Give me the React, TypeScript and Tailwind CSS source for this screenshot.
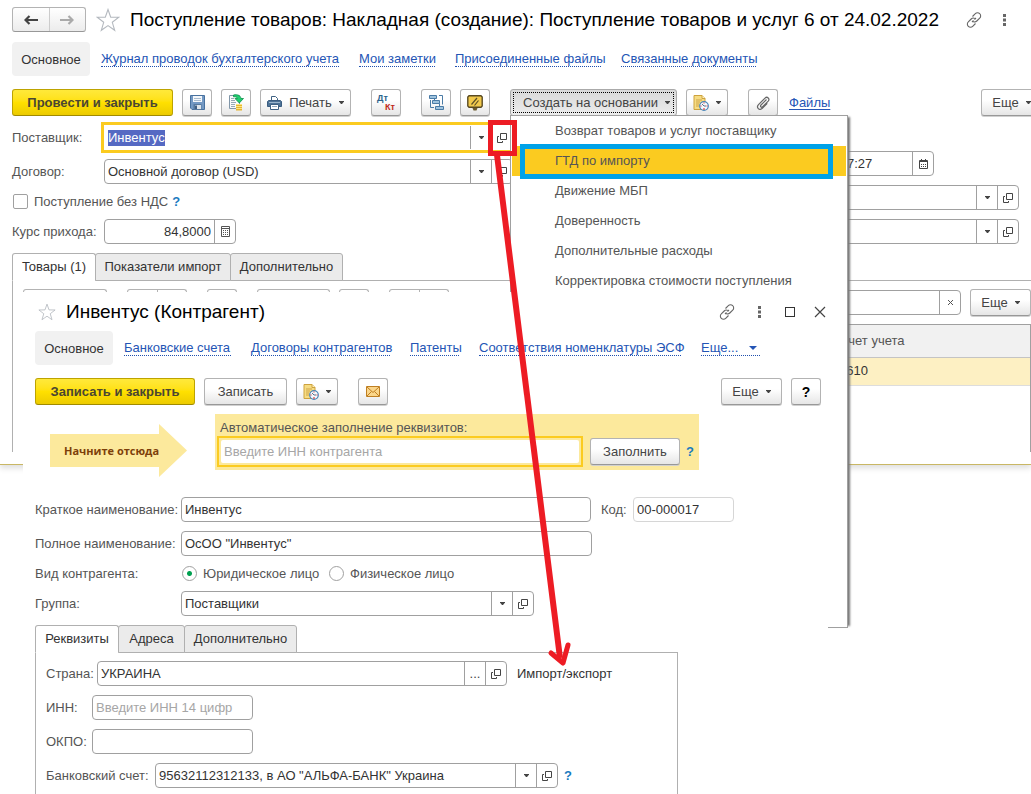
import React, { useEffect, useRef } from "react";

type ButtonProps = {
  className?: string;
  label?: string;
  children?: React.ReactNode;
};

function ToolButton({ className = "w-[30px]", label, children }: ButtonProps) {
  return (
    <button
      type="button"
      aria-label={label}
      className={`flex h-[27px] shrink-0 items-center justify-center rounded-[3px] border border-[#b3b3b3] border-b-[#989898] bg-linear-to-b from-white from-40% to-[#e6e6e6] text-[#444] shadow-[0_1px_0_#d0d0d0] ${className}`}
    >
      {children}
    </button>
  );
}

function PrimaryButton({ className = "", children }: ButtonProps) {
  return (
    <button
      type="button"
      className={`flex h-[27px] shrink-0 items-center justify-center rounded-[3px] border border-[#bda300] border-b-[#a08a00] bg-linear-to-b from-[#ffe93a] via-[#ffe000] to-[#eccb00] font-bold text-[#4a4633] ${className}`}
    >
      {children}
    </button>
  );
}

function Caret() {
  return (
    <svg width="5" height="3" viewBox="0 0 5 3" className="shrink-0" fill="currentColor">
      <path d="M0 0h5v.5L3 3H2L0 .5z" />
    </svg>
  );
}

function OpenIcon() {
  return (
    <svg width="10" height="10" viewBox="0 0 10 10" fill="none" stroke="#444">
      <path d="M3.5 .5h6v6h-6z" />
      <path d="M2 3.5H.5v6h5V8" />
    </svg>
  );
}

function CalcIcon() {
  return (
    <svg width="9" height="11" viewBox="0 0 9 11" fill="none" stroke="#555">
      <path d="M.5 .5h8v10h-8zM1 2.5h7" />
      <path d="M2 4.5h5M2 6.5h5M2 8.5h5" strokeDasharray="1 1" />
    </svg>
  );
}

function CalendarIcon() {
  return (
    <svg width="9" height="10" viewBox="0 0 9 10" fill="none" stroke="#444">
      <path d="M.5 1.5h8v8h-8z" />
      <path d="M0 2.5h9M2.5 0v2M6.5 0v2" />
      <path d="M2 5.5h5M2 7.5h5" strokeDasharray="1 1" />
    </svg>
  );
}

function Star({ size }: { size: number }) {
  return (
    <svg width={size} height={size} viewBox="0 0 24 24" fill="none" stroke="#b4b9bf" strokeWidth="1.1">
      <path d="M12 1.5l2.7 7.7 8.1.1-6.5 5 2.4 8L12 17.6l-6.7 4.7 2.4-8-6.5-5 8.1-.1z" />
    </svg>
  );
}

function LinkIcon() {
  return (
    <svg width="16" height="16" viewBox="0 0 16 16" fill="none" stroke="#666" strokeWidth="1.1">
      <path d="M6.5 4.5l2.8-2.8a3 3 0 0 1 4.4 0 3 3 0 0 1 0 4.4L10.8 9a3 3 0 0 1-3.6.5" />
      <path d="M9.500 11.500l-2.800 2.800a3 3 0 0 1-4.400 0 3 3 0 0 1 0-4.400L5.200 7a3 3 0 0 1 3.600-.5" />
      <path d="M6 10l1.500-1.500M8.500 7.500L10 6" />
    </svg>
  );
}

function DotsIcon() {
  return (
    <svg width="3" height="12" viewBox="0 0 3 12" fill="#666">
      <path d="M0 0h3v3H0zM0 4.5h3v3H0zM0 9h3v3H0z" />
    </svg>
  );
}

function SheetClockIcon() {
  return (
    <svg width="16" height="16" viewBox="0 0 16 16" fill="none">
      <path d="M1 .5h8l3 3v11H1z" fill="#f6dc83" stroke="#cda23e" />
      <path d="M9 .5v3h3" fill="#fff3c4" stroke="#cda23e" />
      <path d="M3 5h6M3 7h4M3 9h3M3 11h3" stroke="#cfa548" />
      <circle cx="11" cy="11" r="4.3" fill="#f3f8fc" stroke="#4a86b8" strokeWidth="1.2" />
      <path d="M11 11l-2-2M11 11h2" stroke="#55718a" />
      <path d="M11 13v2M11 7.5v1M7.500 11h1M13.500 11h1" stroke="#d22" />
    </svg>
  );
}

function SaveIcon() {
  return (
    <svg width="15" height="15" viewBox="0 0 15 15">
      <path d="M.5 .5h14v14H2L.5 13z" fill="#7399c4" stroke="#47719f" />
      <path d="M3 1h9v6H3z" fill="#f4f7fa" />
      <path d="M4 3.5h7M4 5.5h7" stroke="#a9bccf" />
      <path d="M3.5 9h8v6h-8z" fill="#56799f" />
      <path d="M5 10h6v4H5z" fill="#dfe6ec" />
      <path d="M5 10.5h2V14H5z" fill="#3f5f85" />
    </svg>
  );
}

function PostIcon() {
  return (
    <svg width="16" height="17" viewBox="0 0 16 17" fill="none">
      <path d="M1.5 1.5h10v13h-10z" fill="#fafafa" stroke="#8196a8" />
      <path d="M3 4.5h3M3 6.5h4M3 8.5h5M3 10.5h4M3 12.5h4" stroke="#98a8b5" />
      <path d="M5.5 1c4-1 7 .5 7.5 3.500h2.500l-4.200 4.500-4.300-4.500h2.500C9.200 3 7.500 2.500 5.500 2.800z" fill="#21cf70" stroke="#0b914a" strokeWidth=".8" />
      <path d="M8 10h6v6.500H8z" fill="#e4b532" />
      <path d="M8 10.5h6M8 12.5h6M8 14.5h6" stroke="#ffe681" />
    </svg>
  );
}

function PrinterIcon() {
  return (
    <svg width="15" height="14" viewBox="0 0 15 14" fill="none">
      <path d="M4.5 5V.5h4l2 2V5" fill="#fff" stroke="#3e6183" />
      <path d="M1.5 4.5h12l1 1v5H.5v-5z" fill="#4e7397" stroke="#3b5d80" />
      <path d="M2 6.5h11" stroke="#9cb6cd" />
      <path d="M3.5 8.5h8v5h-8z" fill="#fff" stroke="#3e6183" />
      <path d="M5 10.5h5" stroke="#8ca6bd" />
    </svg>
  );
}

function StructureIcon() {
  return (
    <svg width="15" height="15" viewBox="0 0 15 15" fill="#9fc3dd" stroke="#4a7ba6">
      <path d="M.5 .5h7v3h-7zM3.5 5.5h7v3h-7zM6.5 11.5h8v3h-8z" />
      <path d="M10 .5h3.500v9M1.500 5v7.500H5M5.500 3.500v2M10.500 8.500v3" fill="none" />
    </svg>
  );
}

function BoardIcon() {
  return (
    <svg width="16" height="16" viewBox="0 0 16 16" fill="none">
      <path d="M2 .8h12L15.200 2v9L14 12.200H2L.8 11V2z" fill="#f1c94c" stroke="#594a22" strokeWidth="1.4" />
      <path d="M4.500 9.500L10 3M7.500 10.500l4-5" stroke="#5d5026" strokeWidth="1.2" />
      <path d="M5.500 13h5l-1 2.500h-3z" fill="#6b5a2d" />
    </svg>
  );
}

function ClipIcon() {
  return (
    <svg width="14" height="14" viewBox="0 0 14 14" fill="none" stroke="#666" strokeWidth="1.2">
      <path d="M10.5 3.5L5 9c-1.4 1.5.4 3 1.7 1.7l5.500-5.600c2-2.200-.9-5.200-3.200-3L2.500 8.600c-2.700 3 1 6.400 3.800 3.700l5-5" />
    </svg>
  );
}

function MailIcon() {
  return (
    <svg width="14" height="11" viewBox="0 0 14 11" fill="none" stroke="#bf7f22">
      <path d="M.5 .5h13v10H.5z" fill="#fbd68a" />
      <path d="M1 1l6 5.500L13 1M1 10l4.500-4.500M13 10L8.500 5.500" />
    </svg>
  );
}

type FieldProps = {
  label: string;
  id?: string;
  value?: string;
  placeholder?: string;
  className?: string;
  inputClass?: string;
  inputRef?: React.Ref<HTMLInputElement>;
  buttons?: { name: string; icon: React.ReactNode }[];
};

const DROP = { name: "Выбрать", icon: <Caret /> };
const OPEN = { name: "Открыть", icon: <OpenIcon /> };

function Field({
  label,
  id,
  value,
  placeholder,
  className = "rounded-[4px] border-[#a0a0a0]",
  inputClass = "",
  inputRef,
  buttons = [],
}: FieldProps) {
  return (
    <div className={`flex h-[25px] shrink-0 border bg-white ${className}`}>
      <input
        id={id}
        ref={inputRef}
        aria-label={id ? undefined : label}
        defaultValue={value}
        placeholder={placeholder}
        className={`w-0 min-w-0 flex-1 bg-transparent px-[3px] text-[#333] outline-none placeholder:text-[#a6a6a6] selection:bg-[#5569c3] selection:text-white ${inputClass}`}
      />
      {buttons.map((button) => (
        <button
          key={button.name}
          type="button"
          aria-label={button.name}
          className="flex w-[21px] shrink-0 items-center justify-center border-l border-[#a0a0a0] text-[#444]"
        >
          {button.icon}
        </button>
      ))}
    </div>
  );
}

function Tabs({ items }: { items: { name: string; width: string }[] }) {
  return (
    <div role="tablist" className="relative z-1 -mb-px flex h-[28px] shrink-0">
      {items.map((tab, index) => (
        <button
          key={tab.name}
          role="tab"
          type="button"
          aria-selected={index === 0}
          className={`-mr-px rounded-t-[3px] border border-[#b0b0b0] text-[#333] ${tab.width} ${
            index === 0 ? "border-b-white bg-white" : "bg-[#ebebeb]"
          }`}
        >
          {tab.name}
        </button>
      ))}
    </div>
  );
}

function NavLink({ className = "", children }: { className?: string; children: React.ReactNode }) {
  return (
    <a href="#" className={`shrink-0 border-b border-dotted border-[#1f4fae] leading-[14px] whitespace-nowrap text-[#2455b5] ${className}`}>
      {children}
    </a>
  );
}

const menuItems = [
  "Возврат товаров и услуг поставщику",
  "ГТД по импорту",
  "Движение МБП",
  "Доверенность",
  "Дополнительные расходы",
  "Корректировка стоимости поступления",
];

function CreateMenu() {
  return (
    <ul className="absolute top-full left-0 z-10 h-[513px] w-[338px] border border-[#a0a0a0] bg-white px-px shadow-[4px_0_2px_-2px_#777]">
      {menuItems.map((item, index) => (
        <li key={item}>
          <button
            type="button"
            className={`flex h-[30px] w-full items-center pl-[43px] text-[#555] ${index === 1 ? "bg-[#fbcb20]" : ""}`}
          >
            {item}
          </button>
        </li>
      ))}
    </ul>
  );
}

function DocumentWindow() {
  const supplier = useRef<HTMLInputElement>(null);

  useEffect(() => {
    supplier.current?.focus();
    supplier.current?.select();
  }, []);

  return (
    <section className="h-[465px] border-b border-[#c9b764] pt-[7px] pl-3 shadow-[0_3px_6px_#ddd]">
      <header className="flex h-[25px] items-center">
        <div className="flex h-[25px] w-[74px] shrink-0 rounded-[3px] border border-[#b3b3b3] border-b-[#989898] bg-linear-to-b from-white to-[#ececec]">
          <button type="button" aria-label="Назад" className="flex flex-1 items-center justify-center border-r border-[#ccc] text-[#444]">
            <svg width="14" height="10" viewBox="0 0 14 10" fill="none" stroke="currentColor" strokeWidth="2.2">
              <path d="M14 5H2M5.5 1L1.500 5l4 4" />
            </svg>
          </button>
          <button type="button" aria-label="Вперед" className="flex flex-1 items-center justify-center text-[#aaa]">
            <svg width="14" height="10" viewBox="0 0 14 10" fill="none" stroke="currentColor" strokeWidth="2.2">
              <path d="M0 5h12M8.500 1l4 4-4 4" />
            </svg>
          </button>
        </div>
        <button type="button" aria-label="В избранное" className="ml-[10px] shrink-0">
          <Star size={24} />
        </button>
        <h1 className="ml-[10px] w-0 flex-1 text-[19px] whitespace-nowrap text-black">
          Поступление товаров: Накладная (создание): Поступление товаров и услуг 6 от 24.02.2022
        </h1>
        <button type="button" aria-label="Ссылка">
          <LinkIcon />
        </button>
        <button type="button" aria-label="Меню окна" className="mr-[25px] ml-[21px]">
          <DotsIcon />
        </button>
      </header>

      <nav className="mt-[10px] flex h-[34px] items-center gap-5">
        <span className="-mr-[9px] flex h-full w-[78px] items-center justify-center rounded-[4px] bg-[#f1f1f1] pt-px text-[#333]">
          Основное
        </span>
        <NavLink className="w-[238px]">Журнал проводок бухгалтерского учета</NavLink>
        <NavLink className="w-[76px]">Мои заметки</NavLink>
        <NavLink className="w-[146px]">Присоединенные файлы</NavLink>
        <NavLink className="w-[135px]">Связанные документы</NavLink>
      </nav>

      <div className="mt-[13px] flex h-[27px] items-center gap-[9px]">
        <PrimaryButton className="w-[161px]">Провести и закрыть</PrimaryButton>
        <ToolButton label="Записать">
          <SaveIcon />
        </ToolButton>
        <ToolButton label="Провести">
          <PostIcon />
        </ToolButton>
        <ToolButton className="w-[91px] gap-[7px]">
          <PrinterIcon />
          Печать
          <Caret />
        </ToolButton>
        <ToolButton className="ml-[11px] w-[30px]" label="Дт Кт">
          <span className="grid w-[18px] text-[9px] leading-[9px] font-bold">
            <span className="text-left text-[#2b638c]">Дт</span>
            <span className="text-right text-[#c02818]">Кт</span>
          </span>
        </ToolButton>
        <ToolButton className="ml-[11px] w-[30px]" label="Структура подчиненности">
          <StructureIcon />
        </ToolButton>
        <ToolButton label="Показать">
          <BoardIcon />
        </ToolButton>
        <div className="relative ml-[11px] h-[26px] shrink-0 self-start">
          <button
            type="button"
            aria-haspopup="menu"
            aria-expanded="true"
            className="h-[27px] w-[167px] rounded-[3px] border border-[#aaa] bg-linear-to-b from-[#d9d9d9] to-[#ececec] p-[2px] text-[#444]"
          >
            <span className="flex h-full items-center justify-center gap-[7px] border border-dotted border-black pl-[6px] whitespace-nowrap">
              Создать на основании
              <Caret />
            </span>
          </button>
          <CreateMenu />
        </div>
        <ToolButton className="w-[42px] gap-[7px]" label="Отчеты">
          <SheetClockIcon />
          <Caret />
        </ToolButton>
        <ToolButton className="ml-[11px] w-[30px]" label="Вложения">
          <ClipIcon />
        </ToolButton>
        <a href="#" className="ml-[2px] text-[#2455b5] underline underline-offset-2">
          Файлы
        </a>
        <ToolButton className="-mr-[11px] ml-auto w-[61px] gap-[7px]">
          Еще
          <Caret />
        </ToolButton>
      </div>

      <div className="mt-[9px] flex justify-between pr-3">
        <div className="text-[#555]">
          <div className="flex items-center">
            <label htmlFor="supplier" className="w-[92px]">
              Поставщик:
            </label>
            <Field
              id="supplier"
              label="Поставщик"
              value="Инвентус"
              inputRef={supplier}
              className="w-[409px] border-white outline-3 outline-[#fbcb20]"
              buttons={[DROP, OPEN]}
            />
          </div>
          <div className="mt-[9px] flex items-center">
            <label htmlFor="contract" className="w-[92px]">
              Договор:
            </label>
            <Field
              id="contract"
              label="Договор"
              value="Основной договор (USD)"
              className="w-[409px] rounded-[4px] border-[#a0a0a0]"
              buttons={[DROP, OPEN]}
            />
          </div>
          <div className="mt-[10px] flex h-[15px] items-center">
            <label className="flex items-center gap-[6px]">
              <input type="checkbox" className="ml-px size-[15px] appearance-none rounded-[2px] border border-[#a0a0a0]" />
              Поступление без НДС
            </label>
            <button type="button" className="ml-1 font-bold text-[#1a7bbf]">
              ?
            </button>
          </div>
          <div className="mt-[10px] flex items-center">
            <label htmlFor="rate" className="w-[92px]">
              Курс прихода:
            </label>
            <Field
              id="rate"
              label="Курс прихода"
              value="84,8000"
              className="w-[132px] rounded-[4px] border-[#a0a0a0]"
              inputClass="text-right"
              buttons={[{ name: "Калькулятор", icon: <CalcIcon /> }]}
            />
          </div>
        </div>
        <div className="flex flex-col justify-end gap-[9px]">
          <Field
            label="Дата"
            value="24.02.2022 12:17:27"
            className="w-[187px] rounded-[4px] border-[#a0a0a0]"
            inputClass="pl-[5px]"
            buttons={[{ name: "Календарь", icon: <CalendarIcon /> }]}
          />
          <Field label="Организация" className="w-[272px] rounded-[4px] border-[#a0a0a0]" buttons={[DROP, OPEN]} />
          <Field label="Склад" className="w-[272px] rounded-[4px] border-[#a0a0a0]" buttons={[DROP, OPEN]} />
        </div>
      </div>

      <div className="mt-[9px]">
        <Tabs
          items={[
            { name: "Товары (1)", width: "w-[84px]" },
            { name: "Показатели импорт", width: "w-[136px]" },
            { name: "Дополнительно", width: "w-[113px]" },
          ]}
        />
        <div className="h-[172px] border-t border-l border-[#b0b0b0] pt-2 pl-[10px]">
          <div className="flex h-[27px] items-center">
            <ToolButton className="w-[84px]" label="Добавить" />
            <ToolButton className="ml-5 w-[31px] rounded-r-none" label="Вверх" />
            <ToolButton className="-ml-px w-[30px] rounded-l-none" label="Вниз" />
            <ToolButton className="ml-5 w-[30px]" label="Копировать" />
            <ToolButton className="ml-5 w-[73px]" label="Подбор" />
            <ToolButton className="ml-[9px] w-[30px]" label="Изменить" />
            <ToolButton className="ml-5 w-[31px] rounded-r-none" label="Штрихкод" />
            <ToolButton className="-ml-px w-[30px] rounded-l-none" label="Загрузить" />
            <Field
              label="Поиск"
              className="mr-[9px] ml-auto w-[200px] rounded-[4px] border-[#a0a0a0]"
              buttons={[
                {
                  name: "Очистить",
                  icon: (
                    <svg width="5" height="5" viewBox="0 0 5 5" stroke="#555">
                      <path d="M0 0l5 5M5 0L0 5" />
                    </svg>
                  ),
                },
              ]}
            />
            <ToolButton className="w-[61px] gap-[7px]">
              Еще
              <Caret />
            </ToolButton>
          </div>
          <div className="mt-2 h-[128px] border border-b-0 border-[#a0a0a0]">
            <table className="w-full table-fixed border-collapse text-left">
              <thead>
                <tr className="h-8 border-b border-[#c4c4c4] bg-[#f1f1f1] text-[#555]">
                  <td />
                  <th className="w-[191px] font-normal">Счет учета</th>
                </tr>
              </thead>
              <tbody>
                <tr className="h-[28px] border-b border-[#ddd] bg-[#fdf0c3] text-[#333]">
                  <td />
                  <td>1610</td>
                </tr>
              </tbody>
            </table>
          </div>
        </div>
      </div>
    </section>
  );
}

function PartnerWindow() {
  return (
    <section className="absolute top-[292px] bottom-0 left-[23px] z-20 flex w-[805px] flex-col overflow-hidden bg-white pt-[7px] pr-[7px] pl-3 text-[#555]">
      <header className="-mr-[5px] flex h-[25px] shrink-0 items-center">
        <button type="button" aria-label="В избранное" className="ml-[3px]">
          <Star size={18} />
        </button>
        <h2 className="ml-[10px] flex-1 text-[19px] text-black">Инвентус (Контрагент)</h2>
        <button type="button" aria-label="Ссылка">
          <LinkIcon />
        </button>
        <button type="button" aria-label="Меню окна" className="ml-[23px]">
          <DotsIcon />
        </button>
        <button type="button" aria-label="Развернуть" className="ml-6 size-[10px] border border-[#333]" />
        <button type="button" aria-label="Закрыть" className="ml-[19px]">
          <svg width="12" height="12" viewBox="0 0 12 12" stroke="#444" strokeWidth="1.2">
            <path d="M1 1l10 10M11 1L1 11" />
          </svg>
        </button>
      </header>

      <nav className="mt-[7px] flex h-[34px] shrink-0 items-center gap-5">
        <span className="-mr-[9px] flex h-full w-[78px] items-center justify-center rounded-[4px] bg-[#f1f1f1] pt-px text-[#333]">
          Основное
        </span>
        <NavLink className="w-[107px]">Банковские счета</NavLink>
        <NavLink className="w-[139px]">Договоры контрагентов</NavLink>
        <NavLink className="w-[49px]">Патенты</NavLink>
        <NavLink className="w-[202px]">Соответствия номенклатуры ЭСФ</NavLink>
        <NavLink className="flex w-[59px] items-center justify-between pr-[3px]">
          Еще...
          <svg width="8" height="4" viewBox="0 0 8 4" fill="#2455b5">
            <path d="M0 0h8L4 4z" />
          </svg>
        </NavLink>
      </nav>

      <div className="mt-[13px] flex h-[27px] shrink-0 items-center gap-[9px]">
        <PrimaryButton className="w-[160px]">Записать и закрыть</PrimaryButton>
        <ToolButton className="w-[83px]">Записать</ToolButton>
        <ToolButton className="w-[42px] gap-[7px]" label="Отчеты">
          <SheetClockIcon />
          <Caret />
        </ToolButton>
        <ToolButton className="ml-[11px] w-[30px]" label="Письмо">
          <MailIcon />
        </ToolButton>
        <ToolButton className="ml-auto w-[61px] gap-[7px]">
          Еще
          <Caret />
        </ToolButton>
        <ToolButton>
          <b className="text-[14px] text-black">?</b>
        </ToolButton>
      </div>

      <div className="mt-[9px] flex h-[63px] shrink-0 items-start">
        <div className="relative mt-[10px] ml-[15px] flex h-[53px] w-[137px] items-center pl-[14px]">
          <svg className="absolute inset-0" width="137" height="53" viewBox="0 0 137 53" fill="#fce99c">
            <path d="M0 10h109V0l28 26.500L109 53V43H0z" />
          </svg>
          <strong className="relative font-['Open_Sans',sans-serif] text-[11px] whitespace-nowrap text-[#7d3f0a]">Начните отсюда</strong>
        </div>
        <div className="ml-7 h-14 w-[484px] bg-[#fce99c] pt-[5px] pl-[2px]">
          <label htmlFor="autofill" className="block h-[17px] pl-[3px] leading-[17px]">
            Автоматическое заполнение реквизитов:
          </label>
          <div className="flex items-center">
            <div className="w-[366px] border-2 border-[#fbcb20] p-[2px]">
              <input
                id="autofill"
                placeholder="Введите ИНН контрагента"
                className="block h-[23px] w-full rounded-[2px] bg-white px-[3px] outline-none placeholder:text-[#a6a6a6]"
              />
            </div>
            <ToolButton className="ml-[7px] w-[90px]">Заполнить</ToolButton>
            <button type="button" className="ml-[6px] font-bold text-[#1a7bbf]">
              ?
            </button>
          </div>
        </div>
      </div>

      <div className="mt-5 flex items-center">
        <label htmlFor="short-name" className="w-[146px]">
          Краткое наименование:
        </label>
        <Field id="short-name" label="Краткое наименование" value="Инвентус" className="w-[410px] rounded-[4px] border-[#a0a0a0]" />
        <label htmlFor="code" className="ml-[10px] w-8">
          Код:
        </label>
        <Field id="code" label="Код" value="00-000017" className="w-[101px] rounded-[4px] border-[#d6d6d6]" />
      </div>
      <div className="mt-[9px] flex items-center">
        <label htmlFor="full-name" className="w-[146px]">
          Полное наименование:
        </label>
        <Field id="full-name" label="Полное наименование" value={'ОсОО "Инвентус"'} className="w-[411px] rounded-[4px] border-[#a0a0a0]" />
      </div>
      <div role="radiogroup" aria-label="Вид контрагента" className="mt-[10px] flex h-[15px] shrink-0 items-center">
        <span className="w-[146px]">Вид контрагента:</span>
        <label className="flex w-[148px] items-center gap-[6px] pl-px">
          <input
            type="radio"
            name="kind"
            defaultChecked
            className="size-[15px] appearance-none rounded-full border border-[#a0a0a0] checked:bg-[radial-gradient(circle,#00a050_2px,white_3px)]"
          />
          Юридическое лицо
        </label>
        <label className="flex items-center gap-[6px]">
          <input
            type="radio"
            name="kind"
            className="size-[15px] appearance-none rounded-full border border-[#a0a0a0] checked:bg-[radial-gradient(circle,#00a050_2px,white_3px)]"
          />
          Физическое лицо
        </label>
      </div>
      <div className="mt-[10px] flex items-center">
        <label htmlFor="group" className="w-[146px]">
          Группа:
        </label>
        <Field
          id="group"
          label="Группа"
          value="Поставщики"
          className="w-[353px] rounded-[4px] border-[#a0a0a0]"
          buttons={[DROP, OPEN]}
        />
      </div>

      <div className="mt-[9px] flex w-[643px] flex-1 flex-col">
        <Tabs
          items={[
            { name: "Реквизиты", width: "w-[84px]" },
            { name: "Адреса", width: "w-[67px]" },
            { name: "Дополнительно", width: "w-[113px]" },
          ]}
        />
        <div className="flex flex-1 flex-col gap-[9px] border border-b-0 border-[#b0b0b0] pt-2 pl-[10px]">
          <div className="flex items-center">
            <label htmlFor="country" className="w-[51px]">
              Страна:
            </label>
            <Field
              id="country"
              label="Страна"
              value="УКРАИНА"
              className="w-[410px] rounded-[4px] border-[#a0a0a0]"
              buttons={[{ name: "Подобрать", icon: "..." }, OPEN]}
            />
            <span className="ml-[10px] text-[#333]">Импорт/экспорт</span>
          </div>
          <div className="flex items-center">
            <label htmlFor="inn" className="w-[46px]">
              ИНН:
            </label>
            <Field id="inn" label="ИНН" placeholder="Введите ИНН 14 цифр" className="w-[161px] rounded-[4px] border-[#a0a0a0]" />
          </div>
          <div className="flex items-center">
            <label htmlFor="okpo" className="w-[46px]">
              ОКПО:
            </label>
            <Field id="okpo" label="ОКПО" className="w-[161px] rounded-[4px] border-[#a0a0a0]" />
          </div>
          <div className="flex items-center">
            <label htmlFor="bank" className="w-[109px]">
              Банковский счет:
            </label>
            <Field
              id="bank"
              label="Банковский счет"
              value={'95632112312133, в АО "АЛЬФА-БАНК" Украина'}
              className="w-[403px] rounded-[4px] border-[#a0a0a0]"
              buttons={[DROP, OPEN]}
            />
            <button type="button" className="ml-[6px] font-bold text-[#1a7bbf]">
              ?
            </button>
          </div>
        </div>
      </div>
    </section>
  );
}

// Hand-drawn marks over both windows
function Marks() {
  return (
    <svg className="pointer-events-none absolute top-0 left-0 z-30" width="860" height="680" viewBox="0 0 860 680" fill="none">
      <rect x="522.5" y="146.5" width="308" height="30" stroke="#00a2e8" strokeWidth="5" />
      <g stroke="#ed1c24">
        <rect x="490.5" y="122.5" width="24" height="31" strokeWidth="5" />
        <path d="M497 155L560 658" strokeWidth="6" />
        <path d="M551 653l12 10 5-18" strokeWidth="5" strokeLinecap="round" strokeLinejoin="round" />
      </g>
    </svg>
  );
}

export default function App() {
  return (
    <main className="relative min-h-screen overflow-hidden bg-white font-['Liberation_Sans',Arial,sans-serif] text-[13px] leading-4">
      <DocumentWindow />
      <PartnerWindow />
      <Marks />
    </main>
  );
}
